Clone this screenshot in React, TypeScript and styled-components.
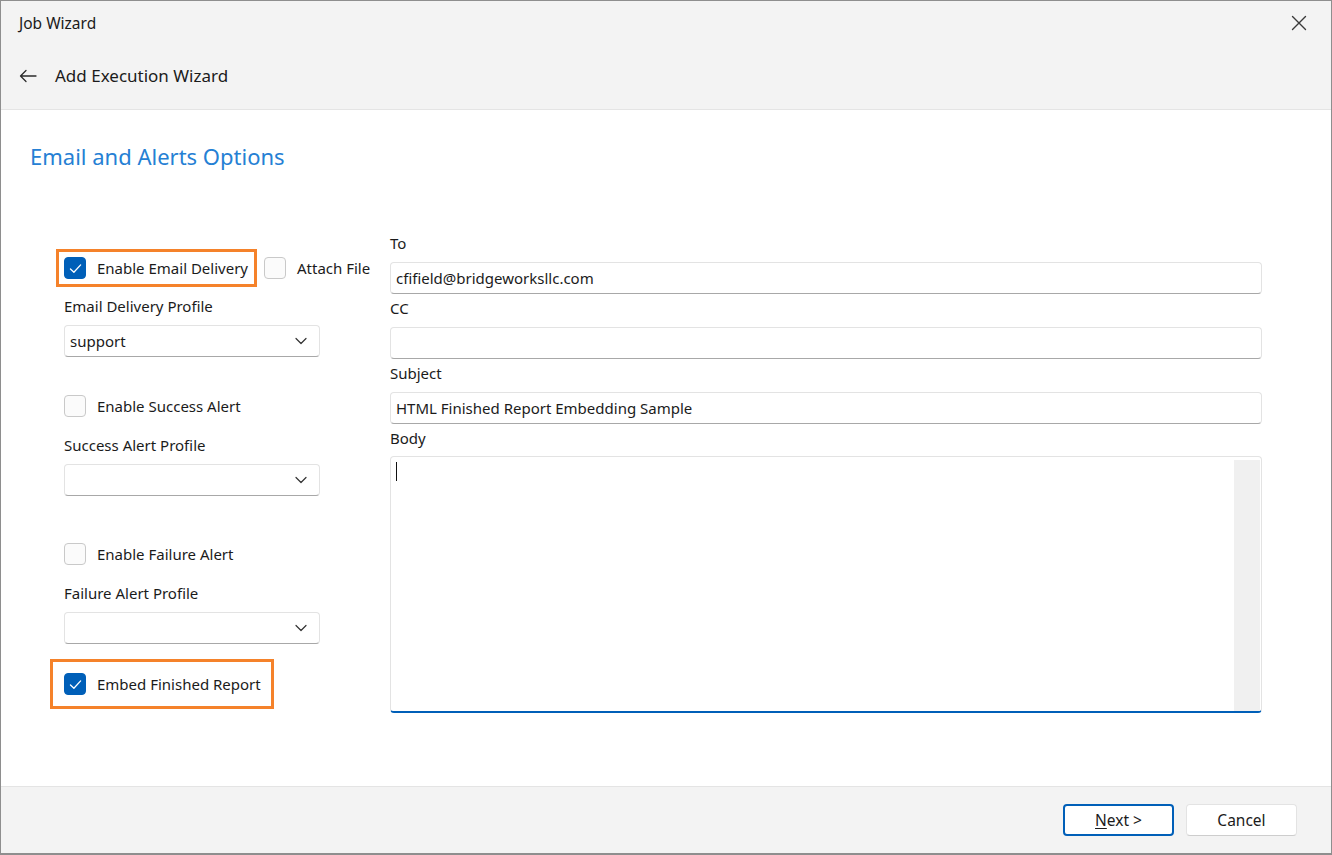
import styled, {createGlobalStyle} from "styled-components";

const GlobalStyle = createGlobalStyle`
    html, body {
        margin: 0;
        padding: 0;
        background: #ffffff;
    }
    body {
        font-family: "Noto Sans", "Open Sans", sans-serif;
        color: #1b1b1b;
    }
    * {
        box-sizing: border-box;
    }
`;

const Window = styled.div`
    width: 1332px;
    height: 855px;
    display: flex;
    flex-direction: column;
    border: 1px solid #8e8e8e;
    border-bottom-width: 2px;
    background: #ffffff;
`;

const Header = styled.header`
    height: 109px;
    background: #f3f3f3;
    border-bottom: 1px solid #e4e4e4;
    display: flex;
    flex-direction: column;
`;

const TitleBar = styled.div`
    height: 43px;
    display: flex;
    align-items: center;
    justify-content: space-between;
    padding: 0 20px 0 18px;
    font-size: 15.5px;
`;

const CloseButton = styled.button`
    width: 24px;
    height: 24px;
    border: none;
    background: transparent;
    padding: 0;
    display: flex;
    align-items: center;
    justify-content: center;
    color: #3a3a3a;
`;

const NavBar = styled.div`
    flex: 1;
    display: flex;
    align-items: center;
    gap: 18px;
    padding: 0 0 2px 18px;
    font-size: 17px;
`;

const BackIcon = styled.span`
    display: flex;
    color: #2b2b2b;
`;

const Content = styled.main`
    flex: 1;
    padding: 31px 69px 0 63px;
`;

const Heading = styled.h2`
    margin: 0 0 62px -34px;
    font-size: 22px;
    line-height: 30px;
    font-weight: 400;
    color: #2580d4;
`;

const FormGrid = styled.div`
    display: grid;
    grid-template-columns: 326px 1fr;
`;

const LeftColumn = styled.div`
    display: flex;
    flex-direction: column;
    align-items: flex-start;
`;

const RightColumn = styled.div`
    display: flex;
    flex-direction: column;
`;

const CheckRow = styled.div<{$top?: number}>`
    display: flex;
    align-items: center;
    height: 38px;
    margin-top: ${(p) => p.$top ?? 0}px;
`;

const Callout = styled.div<{$padX: number; $padY: number; $padRight: number}>`
    display: flex;
    align-items: center;
    border: 3px solid #f5822a;
    margin-left: ${(p) => -(p.$padX + 3)}px;
    padding: ${(p) => p.$padY}px ${(p) => p.$padRight}px ${(p) => p.$padY}px ${(p) => p.$padX}px;
`;

const CheckLabel = styled.label<{$gapLeft?: number}>`
    display: flex;
    align-items: center;
    gap: 11px;
    font-size: 15px;
    line-height: 20px;
    margin-left: ${(p) => p.$gapLeft ?? 0}px;
`;

const Box = styled.span<{$checked: boolean}>`
    width: 22px;
    height: 22px;
    border-radius: 4px;
    display: flex;
    align-items: center;
    justify-content: center;
    background: ${(p) => (p.$checked ? "#005fb8" : "#fbfbfb")};
    border: 1px solid ${(p) => (p.$checked ? "#005fb8" : "#c9c9c9")};
`;

const FieldLabel = styled.div<{$top?: number}>`
    font-size: 15px;
    line-height: 20px;
    margin-top: ${(p) => p.$top ?? 0}px;
`;

const Select = styled.div<{$top?: number}>`
    width: 256px;
    height: 32px;
    margin-top: ${(p) => p.$top ?? 0}px;
    display: flex;
    align-items: center;
    justify-content: space-between;
    padding: 0 12px 0 5px;
    font-size: 15px;
    background: #ffffff;
    border: 1px solid #e3e3e3;
    border-bottom-color: #a8a8a8;
    border-radius: 4px;
`;

const TextInput = styled.div<{$top?: number}>`
    height: 32px;
    margin-top: ${(p) => p.$top ?? 0}px;
    display: flex;
    align-items: center;
    padding: 0 5px;
    font-size: 15px;
    background: #ffffff;
    border: 1px solid #e3e3e3;
    border-bottom-color: #a8a8a8;
    border-radius: 4px;
`;

const BodyEditor = styled.div`
    height: 257px;
    margin-top: 8px;
    display: flex;
    background: #ffffff;
    border: 1px solid #e3e3e3;
    border-bottom: 2px solid #005fb8;
    border-radius: 4px;
    overflow: hidden;
`;

const EditorArea = styled.div`
    flex: 1;
    padding: 5px 5px;
`;

const Caret = styled.span`
    display: block;
    width: 1px;
    height: 19px;
    background: #111111;
`;

const ScrollTrack = styled.div`
    width: 26px;
    margin: 3px 1px 0 0;
    background: #f0f0f0;
`;

const Footer = styled.footer`
    height: 67px;
    background: #f3f3f3;
    border-top: 1px solid #e4e4e4;
    display: flex;
    align-items: center;
    justify-content: flex-end;
    gap: 12px;
    padding-right: 34px;
`;

const Button = styled.button<{$primary?: boolean}>`
    width: 111px;
    height: 32px;
    border-radius: 4px;
    background: #ffffff;
    font-family: inherit;
    font-size: 15.5px;
    color: #1b1b1b;
    border: ${(p) => (p.$primary ? "2px solid #005fb8" : "1px solid #e3e3e3")};
    border-bottom-color: ${(p) => (p.$primary ? "#005fb8" : "#cdcdcd")};
    u {
        text-underline-offset: 2px;
    }
`;

const CheckMark = () => (
    <svg width="15" height="15" viewBox="0 0 14 14" fill="none">
        <path d="M2.3 7.4 L5.5 10.5 L11.8 3.6" stroke="#ffffff" strokeWidth="1.2" strokeLinecap="round" strokeLinejoin="round" />
    </svg>
);

const Chevron = () => (
    <svg width="12" height="8" viewBox="0 0 12 8" fill="none">
        <path d="M1 1.5 L6 6.5 L11 1.5" stroke="#333333" strokeWidth="1.2" strokeLinecap="round" strokeLinejoin="round" />
    </svg>
);

interface CheckProps {
    label: string;
    checked?: boolean;
    gapLeft?: number;
}

const Check = ({label, checked = false, gapLeft}: CheckProps) => (
    <CheckLabel $gapLeft={gapLeft}>
        <Box $checked={checked}>{checked && <CheckMark />}</Box>
        <span>{label}</span>
    </CheckLabel>
);

const App = () => {
    return (
        <>
            <GlobalStyle />
            <Window>
                <Header>
                    <TitleBar>
                        <span>Job Wizard</span>
                        <CloseButton>
                            <svg width="16" height="16" viewBox="0 0 16 16" fill="none">
                                <path d="M1.5 1.5 L14.5 14.5 M14.5 1.5 L1.5 14.5" stroke="#3a3a3a" strokeWidth="1.4" strokeLinecap="round" />
                            </svg>
                        </CloseButton>
                    </TitleBar>
                    <NavBar>
                        <BackIcon>
                            <svg width="18" height="14" viewBox="0 0 18 14" fill="none">
                                <path d="M17 7 H1.5 M7 1.5 L1.5 7 L7 12.5" stroke="#2b2b2b" strokeWidth="1.3" strokeLinecap="round" strokeLinejoin="round" />
                            </svg>
                        </BackIcon>
                        <span>Add Execution Wizard</span>
                    </NavBar>
                </Header>

                <Content>
                    <Heading>Email and Alerts Options</Heading>
                    <FormGrid>
                        <LeftColumn>
                            <CheckRow $top={16}>
                                <Callout $padX={5} $padY={5} $padRight={6}>
                                    <Check label="Enable Email Delivery" checked />
                                </Callout>
                                <Check label="Attach File" gapLeft={7} />
                            </CheckRow>
                            <FieldLabel $top={9}>Email Delivery Profile</FieldLabel>
                            <Select $top={9}>
                                <span>support</span>
                                <Chevron />
                            </Select>

                            <CheckRow $top={30}>
                                <Check label="Enable Success Alert" />
                            </CheckRow>
                            <FieldLabel $top={10}>Success Alert Profile</FieldLabel>
                            <Select $top={9}>
                                <span />
                                <Chevron />
                            </Select>

                            <CheckRow $top={39}>
                                <Check label="Enable Failure Alert" />
                            </CheckRow>
                            <FieldLabel $top={10}>Failure Alert Profile</FieldLabel>
                            <Select $top={9}>
                                <span />
                                <Chevron />
                            </Select>

                            <CheckRow $top={21}>
                                <Callout $padX={11} $padY={11} $padRight={10}>
                                    <Check label="Embed Finished Report" checked />
                                </Callout>
                            </CheckRow>
                        </LeftColumn>

                        <RightColumn>
                            <FieldLabel>To</FieldLabel>
                            <TextInput $top={9}>cfifield@bridgeworksllc.com</TextInput>
                            <FieldLabel $top={4}>CC</FieldLabel>
                            <TextInput $top={9} />
                            <FieldLabel $top={4}>Subject</FieldLabel>
                            <TextInput $top={9}>HTML Finished Report Embedding Sample</TextInput>
                            <FieldLabel $top={4}>Body</FieldLabel>
                            <BodyEditor>
                                <EditorArea>
                                    <Caret />
                                </EditorArea>
                                <ScrollTrack />
                            </BodyEditor>
                        </RightColumn>
                    </FormGrid>
                </Content>

                <Footer>
                    <Button $primary>
                        <u>N</u>ext &gt;
                    </Button>
                    <Button>Cancel</Button>
                </Footer>
            </Window>
        </>
    );
};

export default App;
